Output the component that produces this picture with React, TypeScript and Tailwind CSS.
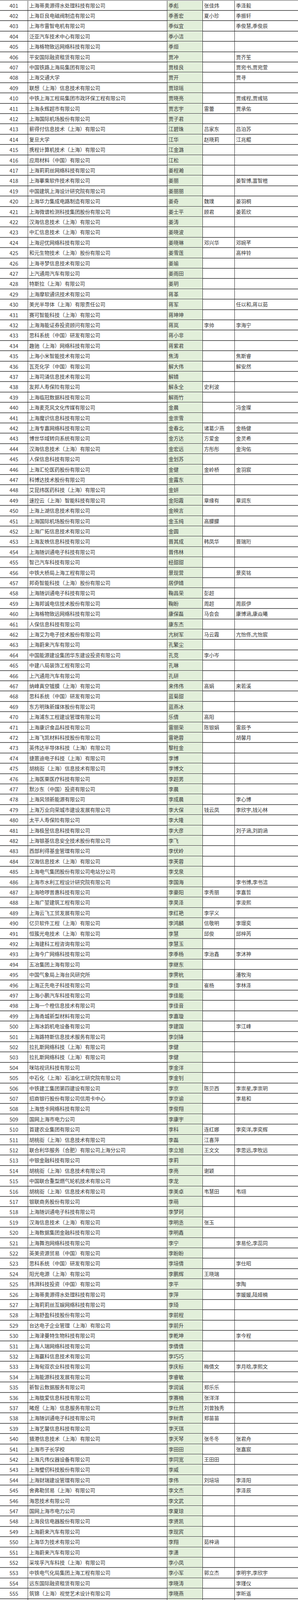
import React from "react";

const raw = `上海蒂奥源得水处理科技有限公司|季彪|张佳炜|季泽毅
上海巨良电磁阀制造有限公司|季善宏|夏小珍|季振轩
上海市雷智电机有限公司|季似宜||季俊慧,季俊辰
泛亚汽车技术中心有限公司|季小洁||
上海格物致远网络科技有限公司|季烜||
平安国际融资租赁有限公司|贾冲||贾齐笙
中国铁路上海局集团有限公司|贾桂良||贾宛书,贾宛萱
上海交通大学|贾开||贾寻
联想（上海）信息技术有限公司|贾琼瑶||
中铁上海工程局集团市政环保工程有限公司|贾晓亮||贾彧程,贾彧铭
上海永辉超市有限公司|贾志宇|雷蕾|贾承佑
上海国际机场股份有限公司|贾子君||
薪得付信息技术（上海）有限公司|江碧珠|吕家东|吕泊苏
复旦大学|江华|赵晓莉|江兆鲲
携程计算机技术（上海）有限公司|江金潞||
应用材料（中国）有限公司|江松||
上海莉莉丝网络科技有限公司|姜程瀚||
上海搴乘软件技术有限公司|姜丽||姜智博,富智楦
中国建筑上海设计研究院有限公司|姜丽丽||
上海华力集成电路制造有限公司|姜奇|魏璞|姜羽桐
上海微谱检测科技集团股份有限公司|姜士平|顾君|姜若欣
汉海信息技术（上海）有限公司|姜涛||
中汇信息技术（上海）有限公司|姜晓波||
上海迎优网络科技有限公司|姜晓琳|邓兴华|邓婉芊
和元生物技术（上海）股份有限公司|姜雪莲||高梓铃
上海寻梦信息技术有限公司|姜瑜||
上汽通用汽车有限公司|姜雨田||
特斯拉（上海）有限公司|姜玥||
上海摩软通讯技术有限公司|蒋革||
美光半导体（上海）有限责任公司|蒋军||任以和,蒋以茹
赛可智能科技（上海）有限公司|蒋坤坤||
上海海能证券投资顾问有限公司|蒋岚|李帅|李海宁
思科系统（中国）研发有限公司|蒋小非||
趣驰（上海）网络科技有限公司|蒋紫君||
上海小米智能技术有限公司|焦涛||焦斯睿
瓦克化学（中国）有限公司|解大伟||解安然
上海司涌信息技术有限公司|解婧||
友邦人寿保险有限公司|解永全|史利波|
上海临冠数据科技有限公司|解雨竹||
上海麦克风文化传媒有限公司|金晨||冯金璨
上海魔识信息科技有限公司|金崇雪||
上海专嘉网络科技有限公司|金春北|诸葛少燕|金杨健
博世华域转向系统有限公司|金方达|方爱金|金灵希
汉海信息技术（上海）有限公司|金宏远|方彤彤|金洵佑
人保信息科技有限公司|金划苏||
上海汇伦医药股份有限公司|金健|金岭桥|金羽宸
科博达技术股份有限公司|金露东||
艾昆纬医药科技（上海）有限公司|金妍||
速控云（上海）智能科技有限公司|金阳霞|章缘有|章润东
上海上湖信息技术有限公司|金映言||
上海国际机场股份有限公司|金玉纯|高朦朦|
上海广拓信息技术有限公司|金圆||
上海友帙信息科技有限公司|晋其成|韩凤华|晋瑞珩
上海随训通电子科技有限公司|晋伟林||
智己汽车科技有限公司|经甜甜||
中铁大桥局上海工程有限公司|景现营||景奕铭
邦奇智能科技（上海）股份有限公司|居伊婧||
上海随训通电子科技有限公司|鞠昌荣|彭超|
上海邦诚电信技术股份有限公司|鞠盼|周超|周辰伊
上海格物致远网络科技有限公司|康保磊|马会会|康博涵,康焱曦
人保信息科技有限公司|康东杰||
上海艾为电子技术股份有限公司|亢树军|马云霞|亢怡佟,亢怡宸
上海蔚来汽车有限公司|孔繁尘||
中国能源建设集团华东建设投资有限公司|孔竞|李小岑|
中建八局装饰工程有限公司|孔琳||
上汽通用汽车有限公司|孔研||
纳峰真空镀膜（上海）有限公司|来伟伟|高娟|来若溪
思科系统（中国）研发有限公司|蓝菊甜||
东方明珠新媒体股份有限公司|蓝燕冰||
上海浦东工程建设管理有限公司|乐倩|高阳|
上海康识食品科技有限公司|雷丽荣|陈银娟|雷辰予
上海飞凯材料科技股份有限公司|雷艳蓉||胡馨月
英伟达半导体科技（上海）有限公司|黎柱金||
捷蒽迪电子科技（上海）有限公司|李博||
胡桃街（上海）信息技术有限公司|李博文||
上海医栗医疗科技有限公司|李超男||
默沙东（中国）投资有限公司|李晨||
上海风领新能源有限公司|李成晨||李心博
上海万业向荣城市建设发展有限公司|李大保|钱云凤|李欣宇,钱沁林
太平人寿保险有限公司|李大隆||
上海极昱信息科技有限公司|李大彦||刘子涵,刘韵涵
上海银基信息安全技术股份有限公司|李飞||
西部利得基金管理有限公司|李伏岭||
汉海信息技术（上海）有限公司|李芙蓉||
上海电气集团股份有限公司电站分公司|李戈泉||
上海市水利工程设计研究院有限公司|李国海||李书博,李书洁
上海哈啰普惠科技有限公司|李豪阳|李秀丽|李嘉哲
上海广堃建筑工程有限公司|李昊泽||李浚熙
上海云飞工贸发展有限公司|李红艳|李学义|
亿贝软件工程（上海）有限公司|李鸿麟|信敬明|李璟奕
恒簇光电技术（上海）有限公司|李慧|邱俊|邱梓芮
上海建科工程咨询有限公司|李慧玉||
上海今广网络科技有限公司|李季杨|李治鑫|李沐神
五冶集团上海有限公司|李继东||
中国气象局上海台风研究所|李霁杭||潘牧洵
上海正先电子科技有限公司|李佳|崔杨|李林泽
上海小鹏汽车科技有限公司|李佳能||
上海一个橙信息技术有限公司|李佳音||
上海甬城新型材料有限公司|李嘉璇||
上海冰韵机电设备有限公司|李建国||李江峰
上海路特斯信息技术服务有限公司|李剑锋||
拉扎斯网络科技（上海）有限公司|李健||
拉扎斯网络科技（上海）有限公司|李健||
咪咕视讯科技有限公司|李金洋||
中石化（上海）石油化工研究院有限公司|李金钊||
中铁建工集团第四建设有限公司|李京|陈贝西|李崇星,李崇玥
招商银行股份有限公司信用卡中心|李京谕||李易和
上海悠卡网络科技有限公司|李俊翔||
国网上海市电力公司|李康宇||
首建农业集团有限公司|李科|连红娜|李奕洋,李奕辉
胡桃街（上海）信息技术有限公司|李磊|江喜萍|
联合利华服务（合肥）有限公司上海分公司|李立旭|王文文|李思远,李牧远
中银金融科技有限公司|李莉||
胡桃街（上海）信息技术有限公司|李亮|谢颖|
中国联合重型燃气轮机技术有限公司|李龙||
胡桃街（上海）信息技术有限公司|李美卓|韦慧田|韦翊
银联商务股份有限公司|李萌||
上海随训通电子科技有限公司|李梦珂||
汉海信息技术（上海）有限公司|李明丞|张玉|
上海数据集团金融科技有限公司|李明鑫||
上海舞泡网络科技有限公司|李宁||李易伦,李蕊同
英美资源贸易（中国）有限公司|李盼盼||
思科系统（中国）研发有限公司|李培倩||李仕昭
阳光电源（上海）有限公司|李鹏辉|王晓瑞|
纬湃科技投资（中国）有限公司|李平||李陶
上海蒂奥源得水处理科技有限公司|李萍||李媛媛,陆娅楠
上海莉莉丝互娱网络科技有限公司|李琦||
上海舒盈科技股份有限公司|李前程||
台达电子企业管理（上海）有限公司|李前升||
上海津曼特生物科技有限公司|李乾坤||李今程
上海人瑞网络科技有限公司|李倩倩||
上海赢科信息技术有限公司|李巧巧||
上海甸双农业科技有限公司|李庆标|梅倩文|李月晗,李熙文
上海能源科技发展有限公司|李睿敏||
新智云数据服务有限公司|李润诚|郑乐乐|
上海胧爱信息科技有限公司|李赛楠|张洋洋|
睹煜（上海）信息服务有限公司|李仕然|刘曾独秀|
上海随训通电子科技有限公司|李树青|郑苗苗|
上海艺馨信息科技有限公司|李天琪||
猎港信息技术（上海）有限公司|李天琴|张冬冬|张君舟
上海市子长学校|李田田||张嘉宸
上海凡伟仪器设备有限公司|李同宽|王田田|
上海璧仞科技股份有限公司|李威||
上海财瑞建设管理有限公司|李伟|刘培培|李泽阳
舍弗勒贸易（上海）有限公司|李文杰||李泽辰
海思技术有限公司|李文武||
国网上海市电力公司|李夏琼||
上海良信电器股份有限公司|李贤凯||
上海蔚来汽车有限公司|李现宾||
上海华为技术有限公司|李翔|茹梓涵|
上海蔚来汽车有限公司|李潇||
采埃孚汽车科技（上海）有限公司|李小凤||
中铁电气化局集团上海工程有限公司|李小军|郭立杰|李明宇,李欣宇
远东国际融资租赁有限公司|李晓涛||李瑾仪
筑锦（上海）视觉艺术设计有限公司|李晓燕||李昕遥
上海绎维软件系统有限公司|李昕欣||杜知悦
颐养齐地（上海）置业发展有限公司|李修刚|徐绍红|李家禾,李家齐
宝山钢铁股份有限公司|李旋||徐聿岑
中微半导体（上海）有限公司|李雪||
上海悦程信息技术有限公司|李雪晨||
汤始建华建材（上海）有限公司|李雪梅||汪胤安
维亚生物科技（上海）有限公司|李雅雯||
上海津和机械制造有限公司|李岩|王心怡|李沐冉
世纪畅链有限责任公司|李彦彬||
恒丰银行股份有限公司私人银行部|李燕茹||
上海龙创汽车设计股份有限公司|李杨|刘金煜|
同舟思备安全技术有限公司|李尧||
默克投资（中国）有限公司|李艺||
上海汽轮机厂有限公司|李翌星||
上海龙鼎建设发展有限公司|李颖||
上海璨誉科技有限公司|李有辉|胡双娥|李怡逸,李泓铄
支付宝（中国）网络技术有限公司|李雨铎||
上海易校信息科技有限公司|李雨伦||
芯启源（上海）半导体科技有限公司|李玉强||
汉海信息技术（上海）有限公司|李月|王少杰|
上海稳利达电力电子有限公司|李玥瑾|罗沙|李承昊,罗浩文
上海治臻新能源股份有限公司|李泽珊||
德佑房地产经纪有限公司|李增勇|鞠凯虹|李昊伦,李芸霓
上海恩溪信息技术有限公司|李振|石晓丽|李思萱
上海泉绮水务工程设计有限公司|李志萍||
中铁上海工程局集团有限公司城市建设分公司|李志望|陈萌萌|李一岑,李一诺,李一铭
宁德时代未来能源（上海）研究院有限公司|李智康|赵琬茹|
上汽大众汽车有限公司|李宗||
平头哥（上海）半导体技术有限公司|郦瀚森||
上海寻梦信息技术有限公司|廉邦||
上海华为技术有限公司|练彩云||
钜泉微电子（上海）有限公司|梁建创||
尚列（上海）贸易有限公司|梁靖||
上海蔚来汽车有限公司|梁明岗||
上海微谱检测科技集团股份有限公司|梁山|周灵|
携程计算机技术（上海）有限公司|梁邵阳||
上海路特斯信息技术服务有限公司|梁世彬|安洁|梁庭安
上汽通用汽车有限公司|廖鸿博|秦晨|
上海享空智能科技有限公司|廖童敏|彭荣珍|廖梓恺,廖梓添
交通运输部上海打捞局|林超波||林姿攸,林楷翔
上海博泽电机有限公司|林德志||林煜航
上海米哈游天命科技有限公司|林华||
上海宝信软件股份有限公司|林江燕||张琳琅
上海蔚来汽车有限公司|林将|章丽百佳|
金恪建筑装饰工程有限公司|林俊娟||褚楚`;

const rows = raw.split("\n").map((l) => l.split("|"));

const H = ["h-[26px]", "h-[26px]", "h-[27px]", "h-[26px]", "h-[27px]"];

export default function App() {
  return (
    <div className="w-[764px] h-[5280px] overflow-hidden bg-white text-[#383838] text-[13px] leading-[16px] font-['Noto_Sans_CJK_SC','Noto_Sans',sans-serif]">
      {rows.map((r, i) => (
        <div
          key={i}
          className={
            H[i % 5] +
            (i === 0
              ? " flex border-t-2 border-[#a6a6a6]"
              : " flex border-t border-[#262626] shadow-[inset_0_1px_0_#9c9c9c]")
          }
        >
          <div className="w-[72px] shrink-0 border-r border-[#262626] flex items-center justify-center text-[13.5px]">
            {401 + i}
          </div>
          <div className="w-[357px] shrink-0 border-r border-[#262626] flex items-center pl-[3px] whitespace-nowrap overflow-hidden">
            {r[0]}
          </div>
          <div className="w-[91px] shrink-0 border-r border-[#262626] bg-[#e2efda] shadow-[inset_1px_1px_0_#f4f9f1] flex items-center pl-[3px] whitespace-nowrap overflow-hidden">
            {r[1]}
          </div>
          <div className="w-[82px] shrink-0 border-r border-[#262626] flex items-center pl-[3px] whitespace-nowrap overflow-hidden">
            {r[2] || ""}
          </div>
          <div className="w-[162px] shrink-0 flex items-center pl-[3px] whitespace-nowrap overflow-hidden">
            {r[3] || ""}
          </div>
        </div>
      ))}
    </div>
  );
}
